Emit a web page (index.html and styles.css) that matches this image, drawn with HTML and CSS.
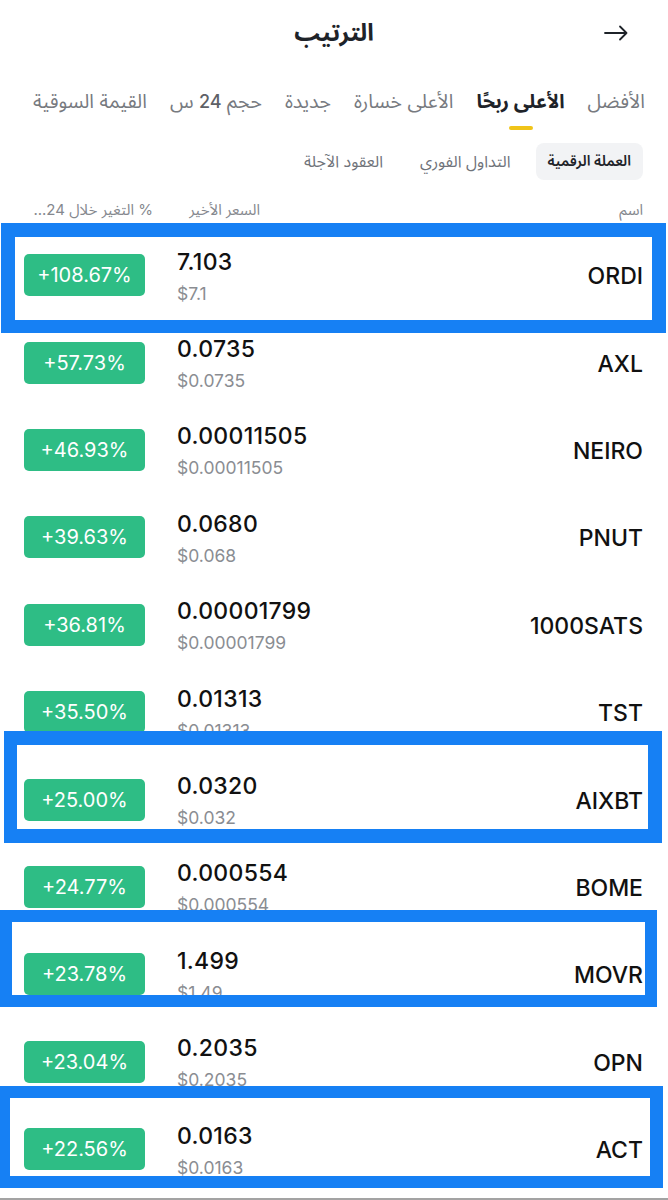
FILE: index.html
```html
<!DOCTYPE html>
<html lang="ar">
<head>
<meta charset="utf-8">
<title>الترتيب</title>
<link rel="stylesheet" href="styles.css">
</head>
<body>
<div class="screen">
  <header class="topbar">
    <span class="spacer"></span>
    <h1 class="title">الترتيب</h1>
    <svg class="back" width="24" height="16" viewBox="0 0 24 16" aria-hidden="true">
      <path d="M1 8 H22.5 M16 1.5 L22.5 8 L16 14.5" fill="none" stroke="#1e2329" stroke-width="1.8" stroke-linecap="round" stroke-linejoin="round"/>
    </svg>
  </header>

  <nav class="tabs" dir="rtl">
    <span class="tab">الأفضل</span>
    <span class="tab active">الأعلى ربحًا</span>
    <span class="tab">الأعلى خسارة</span>
    <span class="tab">جديدة</span>
    <span class="tab">حجم <span class="num">24</span> س</span>
    <span class="tab">القيمة السوقية</span>
  </nav>

  <div class="subtabs" dir="rtl">
    <span class="subtab active">العملة الرقمية</span>
    <span class="subtab">التداول الفوري</span>
    <span class="subtab">العقود الآجلة</span>
  </div>

  <div class="colhead">
    <span class="ch-change" dir="rtl">% التغير خلال 24...</span>
    <span class="ch-price" dir="rtl">السعر الأخير</span>
    <span class="ch-name" dir="rtl">اسم</span>
  </div>

  <ul class="list">
    <li class="row"><span class="badge">+108.67%</span><div class="price"><span class="last">7.103</span><span class="usd">$7.1</span></div><span class="sym">ORDI</span></li>
    <li class="row"><span class="badge">+57.73%</span><div class="price"><span class="last">0.0735</span><span class="usd">$0.0735</span></div><span class="sym">AXL</span></li>
    <li class="row"><span class="badge">+46.93%</span><div class="price"><span class="last">0.00011505</span><span class="usd">$0.00011505</span></div><span class="sym">NEIRO</span></li>
    <li class="row"><span class="badge">+39.63%</span><div class="price"><span class="last">0.0680</span><span class="usd">$0.068</span></div><span class="sym">PNUT</span></li>
    <li class="row"><span class="badge">+36.81%</span><div class="price"><span class="last">0.00001799</span><span class="usd">$0.00001799</span></div><span class="sym">1000SATS</span></li>
    <li class="row"><span class="badge">+35.50%</span><div class="price"><span class="last">0.01313</span><span class="usd">$0.01313</span></div><span class="sym">TST</span></li>
    <li class="row"><span class="badge">+25.00%</span><div class="price"><span class="last">0.0320</span><span class="usd">$0.032</span></div><span class="sym">AIXBT</span></li>
    <li class="row"><span class="badge">+24.77%</span><div class="price"><span class="last">0.000554</span><span class="usd">$0.000554</span></div><span class="sym">BOME</span></li>
    <li class="row"><span class="badge">+23.78%</span><div class="price"><span class="last">1.499</span><span class="usd">$1.49</span></div><span class="sym">MOVR</span></li>
    <li class="row"><span class="badge">+23.04%</span><div class="price"><span class="last">0.2035</span><span class="usd">$0.2035</span></div><span class="sym">OPN</span></li>
    <li class="row"><span class="badge">+22.56%</span><div class="price"><span class="last">0.0163</span><span class="usd">$0.0163</span></div><span class="sym">ACT</span></li>
  </ul>

  <div class="mark mark-1"></div>
  <div class="mark mark-2"></div>
  <div class="mark mark-3"></div>
  <div class="mark mark-4"></div>
</div>
</body>
</html>
```

FILE: styles.css
```css
* { box-sizing: border-box; }

html, body {
  margin: 0;
  padding: 0;
  background: #ffffff;
}

body {
  font-family: Inter, "Noto Sans Arabic", "DejaVu Sans", sans-serif;
  color: #1e2329;
}

.screen {
  position: relative;
  width: 668px;
  height: 1200px;
  overflow: hidden;
  border-bottom: 2px solid #a3a3a3;
}

/* top bar */
.topbar {
  height: 66px;
  display: grid;
  grid-template-columns: 1fr auto 1fr;
  align-items: center;
}

.title {
  margin: 0;
  font-size: 24px;
  font-weight: 700;
  line-height: 30px;
  color: #1e2329;
}

.back {
  justify-self: end;
  margin-right: 40px;
}

/* main tabs */
.tabs {
  margin-top: 22px;
  padding: 0 23px 0 33px;
  display: flex;
  justify-content: space-between;
  align-items: flex-start;
}

.tab {
  position: relative;
  font-size: 19.5px;
  line-height: 26px;
  color: #777a7f;
  white-space: nowrap;
  height: 42px;
}

.tab .num {
  font-family: Inter, sans-serif;
  font-size: 18px;
  font-weight: 500;
  color: #5e6167;
}

.tab.active {
  color: #1e2329;
  font-weight: 700;
}

.tab.active::after {
  content: "";
  position: absolute;
  left: 50%;
  top: 38px;
  width: 24px;
  height: 4px;
  margin-left: -12px;
  border-radius: 2px;
  background: #f0c419;
}

/* sub tabs */
.subtabs {
  margin-top: 13px;
  padding: 0 25px;
  display: flex;
  gap: 13px;
}

.subtab {
  height: 37px;
  padding: 0 12px;
  display: flex;
  align-items: center;
  font-size: 16px;
  color: #6f737a;
  border-radius: 8px;
  white-space: nowrap;
}

.subtab.active {
  background: #f2f3f5;
  color: #1e2329;
  font-size: 14.5px;
  font-weight: 600;
}

/* column header */
.colhead {
  margin-top: 20px;
  height: 20px;
  padding: 0 25px 0 25px;
  display: flex;
  align-items: center;
  font-size: 15px;
  color: #85888e;
  white-space: nowrap;
}

.ch-change { width: 128px; text-align: right; }
.ch-price { margin-left: 27px; width: 80px; text-align: right; }
.ch-name { margin-left: auto; }

/* list */
.list {
  list-style: none;
  margin: 11.5px 0 0 0;
  padding: 0;
}

.row {
  height: 87.4px;
  padding: 0 25px 0 24px;
  display: grid;
  grid-template-columns: 121px 1fr auto;
  column-gap: 32px;
  align-items: center;
}

.badge {
  height: 42px;
  border-radius: 5px;
  background: #2ebd85;
  color: #ffffff;
  font-size: 20px;
  font-weight: 400;
  display: flex;
  align-items: center;
  justify-content: center;
}

.price {
  display: flex;
  flex-direction: column;
  margin-top: 2px;
}

.last {
  font-size: 23px;
  line-height: 26px;
  font-weight: 500;
  letter-spacing: 0.3px;
  color: #111111;
}

.usd {
  margin-top: 9px;
  font-size: 17.5px;
  line-height: 20px;
  color: #8a8d92;
}

.sym {
  font-size: 23px;
  font-weight: 500;
  color: #111111;
  padding-top: 2px;
}

/* annotation boxes drawn over the list */
.mark {
  position: absolute;
  border-style: solid;
  border-color: #1680f4;
  pointer-events: none;
}

.mark-1 { left: 1px;  top: 223px;  width: 665px; height: 110px; border-width: 14px 14px 13px 14px; }
.mark-2 { left: 4px;  top: 731px;  width: 658px; height: 112px; border-width: 14px 14px 14px 13px; }
.mark-3 { left: 0px;  top: 910px;  width: 657px; height: 97px;  border-width: 12px 12px 12px 12px; }
.mark-4 { left: -3px; top: 1086px; width: 666px; height: 102px; border-width: 12px 13px 12px 13px; }
```
